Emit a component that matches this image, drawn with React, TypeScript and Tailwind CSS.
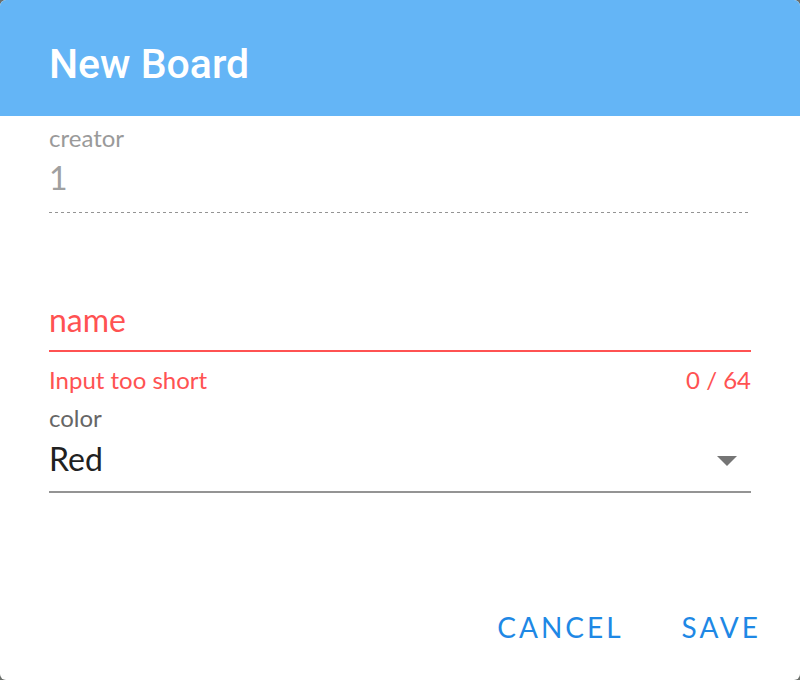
import React from "react";

export default function App() {
  const body = { fontFamily: "Lato, 'Noto Sans', sans-serif" };
  return (
    <div className="w-[800px] h-[680px] bg-[#6b6f6b]">
      <div className="w-[800px] h-[680px] bg-white rounded-[6px] overflow-hidden flex flex-col" style={body}>
        <div className="h-[116px] shrink-0 bg-[#64b5f6] px-[49px] pt-[40px]">
          <div
            className="text-white text-[41px] leading-[48px] font-medium"
            style={{ fontFamily: "Roboto, 'Noto Sans', sans-serif" }}
          >
            New Board
          </div>
        </div>

        <div className="flex flex-col px-[49px]">
          <div className="mt-[7px] text-[24px] leading-[29px] text-[#9a9a9a]">creator</div>
          <div className="mt-[7px] text-[32px] leading-[38px] text-[#a0a0a0]">1</div>
          <div className="mt-[15px] h-[1px] bg-[linear-gradient(to_right,#949494_3px,transparent_3px)] bg-[length:6px_1px] bg-repeat-x"></div>

          <div className="mt-[88px] text-[32px] leading-[38px] text-[#ff5252]">name</div>
          <div className="mt-[11px] h-[2px] bg-[#ff5252]"></div>
          <div className="mt-[13px] flex justify-between text-[24px] leading-[29px] text-[#ff5252]">
            <span>Input too short</span>
            <span>0 / 64</span>
          </div>

          <div className="mt-[9px] text-[24px] leading-[29px] text-[#666666]">color</div>
          <div className="mt-[4px] h-[48px] flex justify-between items-start">
            <span className="mt-[4px] text-[32px] leading-[38px] text-[#212121]">Red</span>
            <svg width="48" height="48" viewBox="0 0 24 24" className="shrink-0">
              <path d="M7 10l5 5 5-5z" fill="#757575" />
            </svg>
          </div>
          <div className="mt-[7px] h-[2px] bg-[#949494]"></div>
        </div>

        <div className="flex-1"></div>

        <div className="flex justify-end gap-[58px] pr-[39px] pb-[36px]">
          <span className="text-[28px] leading-[34px] tracking-[3px] text-[#1e88e5]">CANCEL</span>
          <span className="text-[28px] leading-[34px] tracking-[3px] text-[#1e88e5]">SAVE</span>
        </div>
      </div>
    </div>
  );
}
